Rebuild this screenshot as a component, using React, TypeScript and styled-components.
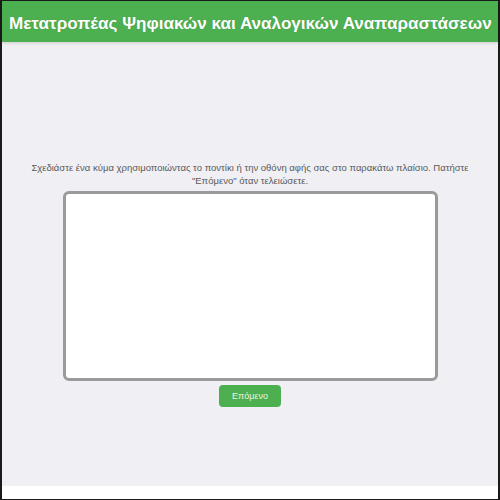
import styled, { createGlobalStyle } from "styled-components";

const GlobalStyle = createGlobalStyle`
  html, body {
    margin: 0;
    padding: 0;
    background: #ffffff;
  }
  * {
    box-sizing: border-box;
  }
`;

const App = () => {
  return (
    <>
      <GlobalStyle />
      <Frame>
        <Header>
          <Title>Μετατροπέας Ψηφιακών και Αναλογικών Αναπαραστάσεων</Title>
        </Header>
        <Main>
          <Instructions>
            Σχεδιάστε ένα κύμα χρησιμοποιώντας το ποντίκι ή την οθόνη αφής σας
            στο παρακάτω πλαίσιο. Πατήστε "Επόμενο" όταν τελειώσετε.
          </Instructions>
          <DrawArea />
          <NextButton>Επόμενο</NextButton>
        </Main>
        <Footer />
      </Frame>
    </>
  );
};

const Frame = styled.div`
  width: 500px;
  height: 500px;
  display: flex;
  flex-direction: column;
  border: 1px solid #1a1a1a;
  border-left-width: 2px;
  border-right-width: 2px;
  background: #ffffff;
  font-family: "Liberation Sans", Arial, sans-serif;
`;

const Header = styled.header`
  height: 41px;
  flex-shrink: 0;
  display: flex;
  align-items: center;
  padding: 0 7px;
  background-color: #4caf50;
  box-shadow: 0 1px 3px rgba(0, 0, 0, 0.15);
  position: relative;
`;

const Title = styled.h1`
  margin: 0;
  padding-top: 4px;
  font-size: 17.1px;
  font-weight: bold;
  color: #ffffff;
  white-space: nowrap;
  text-shadow: 0 0 1px rgba(0, 0, 0, 0.15);
`;

const Main = styled.main`
  flex: 1;
  display: flex;
  flex-direction: column;
  align-items: center;
  padding-top: 119px;
  background-color: #efeff4;
`;

const Instructions = styled.p`
  margin: 0 0 4px;
  width: 448px;
  font-size: 9.5px;
  line-height: 13px;
  text-align: center;
  color: #5a5a5a;
`;

const DrawArea = styled.div`
  width: 375px;
  height: 190px;
  background: #ffffff;
  border: 3px solid #9a9a9a;
  border-radius: 6px;
`;

const NextButton = styled.button`
  margin-top: 4px;
  width: 62px;
  height: 22px;
  padding: 0;
  border: none;
  border-radius: 4px;
  background-color: #4caf50;
  color: #e8f5e8;
  font-family: "Liberation Sans", Arial, sans-serif;
  font-size: 9px;
  cursor: pointer;
`;

const Footer = styled.div`
  height: 13px;
  flex-shrink: 0;
  background: #ffffff;
`;

export default App;
